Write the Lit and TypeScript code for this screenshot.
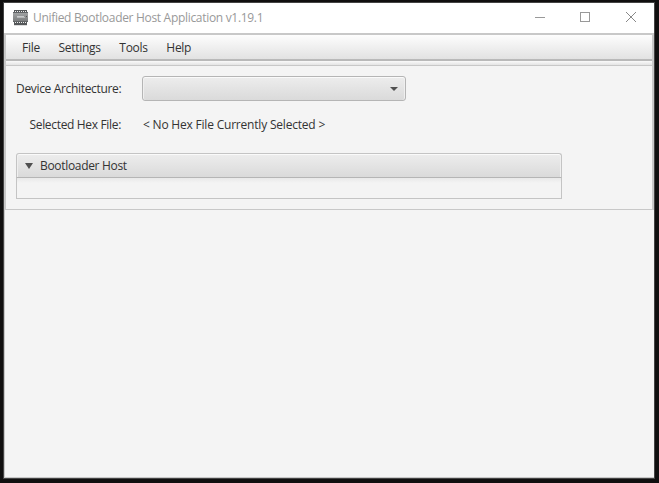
import { LitElement, html, css } from "lit";
import { customElement } from "lit/decorators.js";

@customElement("app-root")
export class AppRoot extends LitElement {
  static styles = css`
    :host {
      display: block;
      box-sizing: border-box;
      width: 659px;
      height: 483px;
      padding: 2px 4px 4px 3px;
      background: #100f0f;
      overflow: hidden;
      font: 12px/16px "Open Sans", "Noto Sans", sans-serif;
      color: #333;
      white-space: nowrap;
    }
    * { box-sizing: border-box; }
    .window {
      height: 477px;
      border: 1px solid #444;
      background: #f4f4f4;
      display: flex;
      flex-direction: column;
    }
    .title {
      height: 30px;
      flex: none;
      background: #fff;
      display: flex;
      align-items: center;
      padding-left: 9px;
      color: #999;
    }
    .chip { width: 15px; height: 16px; margin-right: 5px; }
    .name { flex: 1; letter-spacing: -0.31px; }
    .ctl { width: 45px; height: 30px; flex: none; }
    .client {
      flex: 1;
      border: solid #c8c8c8;
      border-width: 2px 0 1px 1px;
      display: flex;
      flex-direction: column;
    }
    .upper {
      border: solid #c8c8c8;
      border-width: 0 2px 1px 1px;
      height: 175px;
    }
    .menu {
      height: 26px;
      display: flex;
      align-items: center;
      gap: 18.6px;
      padding: 2px 0 0 16px;
      background: linear-gradient(#fdfdfd, #e2e2e2);
      border-bottom: 2px solid #b9b9b9;
      letter-spacing: -0.28px;
    }
    .strip {
      height: 5px;
      background: linear-gradient(#fafafa, #e4e4e4);
      border-bottom: 1px solid #c8c8c8;
    }
    .form { padding: 10px 0 0 10px; }
    .row { display: flex; align-items: center; height: 25px; }
    .row.hex { margin-top: 11px; }
    .label { width: 105px; text-align: right; margin-right: 21px; letter-spacing: -0.33px; }
    .file { margin-left: 1px; letter-spacing: -0.2px; }
    .combo {
      width: 264px;
      height: 25px;
      border: 1px solid #b5b5b5;
      border-radius: 3px;
      background: linear-gradient(#ededed, #dadada);
      box-shadow: inset 0 1px #fafafa, inset 1px 0 #efefef, inset -1px 0 #efefef;
      display: flex;
      align-items: center;
      justify-content: flex-end;
      padding-right: 7px;
    }
    .pane { width: 546px; margin-top: 16px; }
    .pane-head {
      height: 25px;
      border: 1px solid #c4c4c4;
      border-bottom-color: #b5b5b5;
      border-radius: 3px 3px 0 0;
      background: linear-gradient(#ededed, #dadada);
      box-shadow: inset 0 1px #fafafa, inset 1px 0 #efefef, inset -1px 0 #efefef;
      display: flex;
      align-items: center;
      padding-left: 8px;
      gap: 7px;
    }
    .pane-name { letter-spacing: -0.32px; }
    .pane-body {
      height: 21px;
      border: 1px solid #c4c4c4;
      border-top: 0;
      background: linear-gradient(#e9e9e9, #f4f4f4 5px);
    }
    svg { display: block; flex: none; }
  `;

  render() {
    return html`
      <div class="window">
        <div class="title">
          <svg class="chip" viewBox="0 0 15 16">
            <defs>
              <linearGradient id="body" x2="0" y2="1">
                <stop offset="0" stop-color="#a0a2a3" />
                <stop offset="1" stop-color="#77797a" />
              </linearGradient>
            </defs>
            <rect x="1" y="0" width="13" height="15" fill="#55585a" />
            <path d="M2 1.5h12M2 12.5h12" stroke="#eee" stroke-dasharray="1 1" />
            <rect x="0" y="3" width="15" height="9" fill="url(#body)" />
            <path d="M0 2.5h15M0 11.5h15" stroke="#626567" />
            <path d="M4 6.5h7" stroke="#c9cbcc" />
            <path d="M4 7.5h8" stroke="#b4b6b7" />
            <path d="M13 6.5h1" stroke="#555" />
            <path d="M1 15.5h13" stroke="#ddd" />
          </svg>
          <span class="name">Unified Bootloader Host Application v1.19.1</span>
          <svg class="ctl" viewBox="0 0 45 30"><path d="M16 14.5h10" stroke="#999" /></svg>
          <svg class="ctl" viewBox="0 0 45 30"><rect x="16.5" y="9.5" width="9" height="9" fill="none" stroke="#999" /></svg>
          <svg class="ctl" viewBox="0 0 45 30"><path d="M17 9l10 10M27 9l-10 10" stroke="#888" /></svg>
        </div>
        <div class="client">
          <div class="upper">
            <div class="menu">
              <span>File</span><span>Settings</span><span>Tools</span><span>Help</span>
            </div>
            <div class="strip"></div>
            <div class="form">
              <div class="row">
                <span class="label">Device Architecture:</span>
                <div class="combo">
                  <svg width="8" height="4" viewBox="0 0 8 4"><path d="M0 0h8L4 4z" fill="#505050" /></svg>
                </div>
              </div>
              <div class="row hex">
                <span class="label">Selected Hex File:</span>
                <span class="file">&lt; No Hex File Currently Selected &gt;</span>
              </div>
              <div class="pane">
                <div class="pane-head">
                  <svg width="8" height="6" viewBox="0 0 8 6"><path d="M0 0h8L4 6z" fill="#505050" /></svg>
                  <span class="pane-name">Bootloader Host</span>
                </div>
                <div class="pane-body"></div>
              </div>
            </div>
          </div>
        </div>
      </div>
    `;
  }
}
